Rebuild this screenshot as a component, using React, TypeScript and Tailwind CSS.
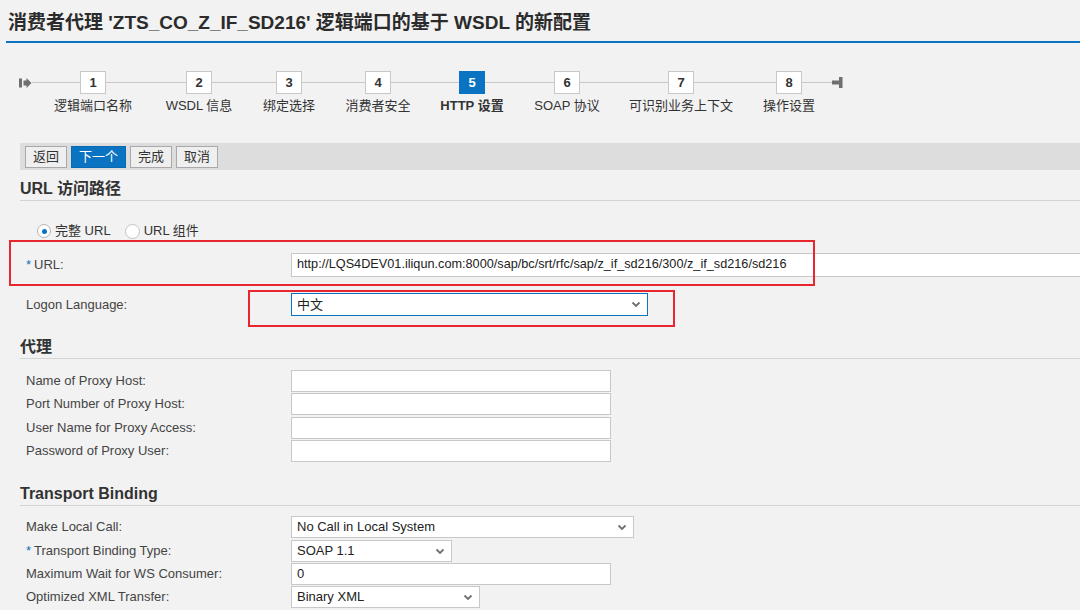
import React from 'react';

const FONT = '"Liberation Sans", "Noto Sans CJK SC", Arial, sans-serif';

const steps = [
  { n: 1, label: '逻辑端口名称', ml: 'ml-[31px]' },
  { n: 2, label: 'WSDL 信息', ml: 'ml-[46px]' },
  { n: 3, label: '绑定选择', ml: 'ml-[30px]' },
  { n: 4, label: '消费者安全', ml: 'ml-[29px]' },
  { n: 5, label: 'HTTP 设置', ml: 'ml-[34px]', active: true },
  { n: 6, label: 'SOAP 协议', ml: 'ml-[35px]' },
  { n: 7, label: '可识别业务上下文', ml: 'ml-[54px]' },
  { n: 8, label: '操作设置', ml: 'ml-[48px]' },
];

function Chevron() {
  return (
    <svg width="10" height="7" viewBox="0 0 10 7" className="shrink-0">
      <path d="M1.5 1.5 L5 5 L8.5 1.5" fill="none" stroke="#707070" strokeWidth="1.8" />
    </svg>
  );
}

function TextBox({ w, value = '', h = 'h-[22px]', size = 'text-[13px]' }: { w: string; value?: string; h?: string; size?: string }) {
  return (
    <div className={`${w} ${h} shrink-0 bg-white border border-[#c8c8c8] flex items-center px-[5px] ${size} text-[#222] whitespace-nowrap overflow-hidden`}>
      {value}
    </div>
  );
}

function SelectBox({ w, value, blue = false, h = 'h-[22px]' }: { w: string; value: string; blue?: boolean; h?: string }) {
  return (
    <div
      className={`${w} ${h} shrink-0 bg-white border ${blue ? 'border-[#0a74c2]' : 'border-[#c8c8c8]'} flex items-center justify-between pl-[5px] pr-[6px] text-[13px] text-[#222]`}
    >
      <span>{value}</span>
      <Chevron />
    </div>
  );
}

function Row({ label, req = false, mt, children }: { label: string; req?: boolean; mt: string; children: React.ReactNode }) {
  return (
    <div className={`flex items-center pl-[26px] ${mt}`}>
      <div className="w-[265px] shrink-0 text-[13px] text-[#444] whitespace-nowrap">
        {req && <span className="text-[#0a74c2] mr-[3px]">*</span>}
        {label}
      </div>
      {children}
    </div>
  );
}

function Heading({ text, mt }: { text: string; mt: string }) {
  return (
    <div className={`ml-[20px] ${mt} border-b border-[#d4d4d4] pb-[1px] text-[16px] leading-[20px] font-bold text-[#333]`}>
      {text}
    </div>
  );
}

export default function App() {
  return (
    <div className="relative w-[1080px] h-[610px] overflow-hidden bg-[#f2f2f2]" style={{ fontFamily: FONT }}>
      {/* title */}
      <div className="pt-[10px] pl-[8px] h-[41px] text-[19px] leading-[26px] font-bold text-[#2b2b2b] whitespace-nowrap">
        消费者代理 'ZTS_CO_Z_IF_SD216' 逻辑端口的基于 WSDL 的新配置
      </div>
      <div className="ml-[6px] h-[2px] bg-[#0a74c2]" />

      {/* wizard steps */}
      <div className="relative mt-[28px] pl-[19px] flex items-start h-[42px]">
        <div className="absolute left-[32px] top-[11px] w-[800px] h-px bg-[#c8c8c8]" />
        <svg width="13" height="10" viewBox="0 0 13 10" className="relative mt-[7px] shrink-0">
          <rect x="0" y="0.5" width="3" height="9" fill="#6f6f6f" />
          <path d="M4.5 2.5 H7.5 V0 L12.5 5 L7.5 10 V7.5 H4.5 Z" fill="#6f6f6f" />
        </svg>
        {steps.map((s) => (
          <div key={s.n} className={`relative w-[60px] flex flex-col items-center ${s.ml}`}>
            <div
              className={`w-[26px] h-[23px] flex items-center justify-center text-[13px] font-bold border ${
                s.active ? 'bg-[#0a74c2] border-[#0a74c2] text-white' : 'bg-white border-[#c8c8c8] text-[#333]'
              }`}
            >
              {s.n}
            </div>
            <div className={`mt-[4px] text-[13px] leading-[16px] whitespace-nowrap text-[#333] ${s.active ? 'font-bold' : ''}`}>
              {s.label}
            </div>
          </div>
        ))}
        <svg width="11" height="12" viewBox="0 0 11 12" className="relative ml-[13px] mt-[6px] shrink-0">
          <rect x="0" y="3.5" width="8" height="4" fill="#6f6f6f" />
          <rect x="7" y="0" width="3.5" height="11" fill="#6f6f6f" />
        </svg>
      </div>

      {/* buttons */}
      <div className="ml-[20px] mt-[30px] h-[27px] bg-[#dddddd] flex items-center gap-[4px] pl-[5px]">
        <button className="h-[22px] px-[7px] text-[13px] text-[#333] bg-[#efefef] border border-[#a9a9a9]">返回</button>
        <button className="h-[22px] px-[7px] text-[13px] text-white bg-[#0a74c2] border border-[#0a6ab0]">下一个</button>
        <button className="h-[22px] px-[7px] text-[13px] text-[#333] bg-[#efefef] border border-[#a9a9a9]">完成</button>
        <button className="h-[22px] px-[7px] text-[13px] text-[#333] bg-[#efefef] border border-[#a9a9a9]">取消</button>
      </div>

      <Heading text="URL 访问路径" mt="mt-[9px]" />

      {/* radios */}
      <div className="mt-[22px] ml-[37px] h-[16px] flex items-center text-[13px] text-[#333]">
        <span className="w-[14px] h-[14px] rounded-full bg-white border border-[#b5b5b5] flex items-center justify-center">
          <span className="w-[5px] h-[5px] rounded-full bg-[#0a74c2]" />
        </span>
        <span className="ml-[4px]">完整 URL</span>
        <span className="ml-[14px] w-[15px] h-[15px] rounded-full bg-white border border-[#c4c4c4]" />
        <span className="ml-[4px]">URL 组件</span>
      </div>

      <Row label="URL:" req mt="mt-[14px]">
        <TextBox
          w="w-[800px]"
          h="h-[24px]"
          size="text-[12.7px]"
          value="http://LQS4DEV01.iliqun.com:8000/sap/bc/srt/rfc/sap/z_if_sd216/300/z_if_sd216/sd216"
        />
      </Row>
      <Row label="Logon Language:" mt="mt-[16px]">
        <SelectBox w="w-[357px]" h="h-[23px]" value="中文" blue />
      </Row>

      <Heading text="代理" mt="mt-[21px]" />
      <Row label="Name of Proxy Host:" mt="mt-[11px]">
        <TextBox w="w-[320px]" />
      </Row>
      <Row label="Port Number of Proxy Host:" mt="mt-[1px]">
        <TextBox w="w-[320px]" />
      </Row>
      <Row label="User Name for Proxy Access:" mt="mt-[2px]">
        <TextBox w="w-[320px]" />
      </Row>
      <Row label="Password of Proxy User:" mt="mt-[1px]">
        <TextBox w="w-[320px]" />
      </Row>

      <Heading text="Transport Binding" mt="mt-[22px]" />
      <Row label="Make Local Call:" mt="mt-[10px]">
        <SelectBox w="w-[343px]" value="No Call in Local System" />
      </Row>
      <Row label="Transport Binding Type:" req mt="mt-[2px]">
        <SelectBox w="w-[161px]" value="SOAP 1.1" />
      </Row>
      <Row label="Maximum Wait for WS Consumer:" mt="mt-[1px]">
        <TextBox w="w-[320px]" value="0" />
      </Row>
      <Row label="Optimized XML Transfer:" mt="mt-[1px]">
        <SelectBox w="w-[189px]" value="Binary XML" />
      </Row>

      {/* red annotation boxes */}
      <div className="absolute left-[9px] top-[240px] w-[806px] h-[46px] border-2 border-[#e8262e]" />
      <div className="absolute left-[248px] top-[290px] w-[427px] h-[37px] border-2 border-[#e8262e]" />
    </div>
  );
}
